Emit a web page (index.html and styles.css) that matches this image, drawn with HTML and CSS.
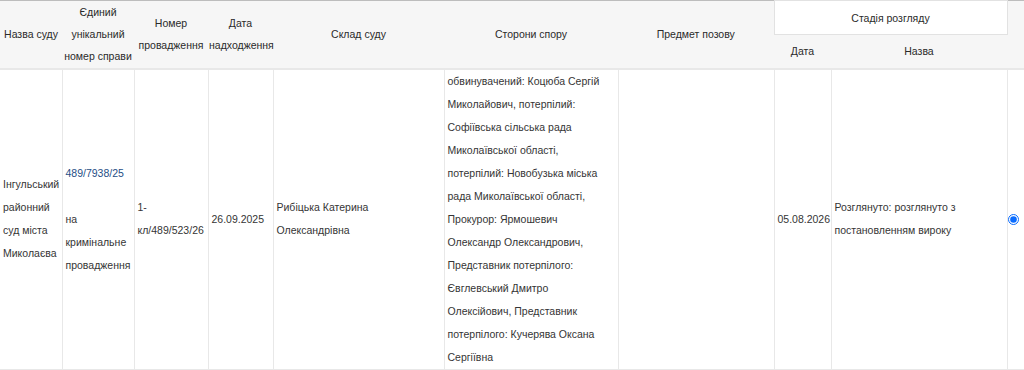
FILE: index.html
```html
<!DOCTYPE html>
<html lang="uk">
<head>
<meta charset="utf-8">
<title>Справи</title>
<link rel="stylesheet" href="styles.css">
</head>
<body>
<table class="cases">
  <colgroup>
    <col class="c1"><col class="c2"><col class="c3"><col class="c4"><col class="c5">
    <col class="c6"><col class="c7"><col class="c8"><col class="c9"><col class="c10">
  </colgroup>
  <thead>
    <tr class="h1">
      <th rowspan="2">Назва суду</th>
      <th rowspan="2">Єдиний унікальний номер справи</th>
      <th rowspan="2">Номер провадження</th>
      <th rowspan="2">Дата надходження</th>
      <th rowspan="2">Склад суду</th>
      <th rowspan="2">Сторони спору</th>
      <th rowspan="2">Предмет позову</th>
      <th colspan="2" class="stage">Стадія розгляду</th>
      <th rowspan="2"></th>
    </tr>
    <tr class="h2">
      <th>Дата</th>
      <th>Назва</th>
    </tr>
  </thead>
  <tbody>
    <tr>
      <td>Інгульський районний суд міста Миколаєва</td>
      <td><a href="#" class="case-link">489/7938/25</a><br><br>на кримінальне провадження</td>
      <td>1-кл/489/523/26</td>
      <td>26.09.2025</td>
      <td>Рибіцька Катерина Олександрівна</td>
      <td class="parties">обвинувачений: Коцюба Сергій Миколайович, потерпілий: Софіївська сільська рада Миколаївської області, потерпілий: Новобузька міська рада Миколаївської області, Прокурор: Ярмошевич Олександр Олександрович, Представник потерпілого: Євглевський Дмитро Олексійович, Представник потерпілого: Кучерява Оксана Сергіївна</td>
      <td></td>
      <td class="nowrap">05.08.2026</td>
      <td>Розглянуто: розглянуто з постановленням вироку</td>
      <td class="radio-cell"><input type="radio" name="sel" checked class="radio"></td>
    </tr>
  </tbody>
</table>
</body>
</html>
```
FILE: styles.css
```css
html, body {
  margin: 0;
  padding: 0;
  background: #fff;
}
body {
  font-family: "Liberation Sans", Arial, sans-serif;
  font-size: 10.5px;
  color: #353535;
}
.cases {
  width: 1024px;
  table-layout: fixed;
  border-collapse: collapse;
  border-top: 1px solid #bdbdbd;
}
.c1 { width: 62px; }
.c2 { width: 72px; }
.c3 { width: 74px; }
.c4 { width: 65px; }
.c5 { width: 171px; }
.c6 { width: 174px; }
.c7 { width: 156px; }
.c8 { width: 57px; }
.c9 { width: 176px; }
.c10 { width: 17px; }

.cases th {
  background: #f6f6f6;
  color: #2a2a2a;
  font-weight: normal;
  line-height: 22px;
  padding: 0 1px;
  text-align: center;
  vertical-align: middle;
}
.h1 { height: 34px; }
.h2 { height: 34px; }
.cases th.stage {
  background: #fff;
  border: 1px solid #e2e2e2;
}
.cases thead {
  border-bottom: 2px solid #e8e8e8;
}
.cases td {
  line-height: 23px;
  padding: 0 3px;
  vertical-align: middle;
  text-align: left;
  border-left: 1px solid #e8e8e8;
  border-right: 1px solid #e8e8e8;
  border-bottom: 2px solid #e8e8e8;
  height: 297px;
}
.cases td.parties { padding-right: 10px; }
.cases td:first-child { border-left: none; }
.case-link {
  color: #1f4e86;
  text-decoration: none;
}
.nowrap { white-space: nowrap; }
.radio-cell {
  text-align: center;
}
.cases td.radio-cell { padding: 0; }
.radio {
  width: 11px;
  height: 11px;
  margin: 0;
  accent-color: #0a6cff;
  vertical-align: middle;
}
```
